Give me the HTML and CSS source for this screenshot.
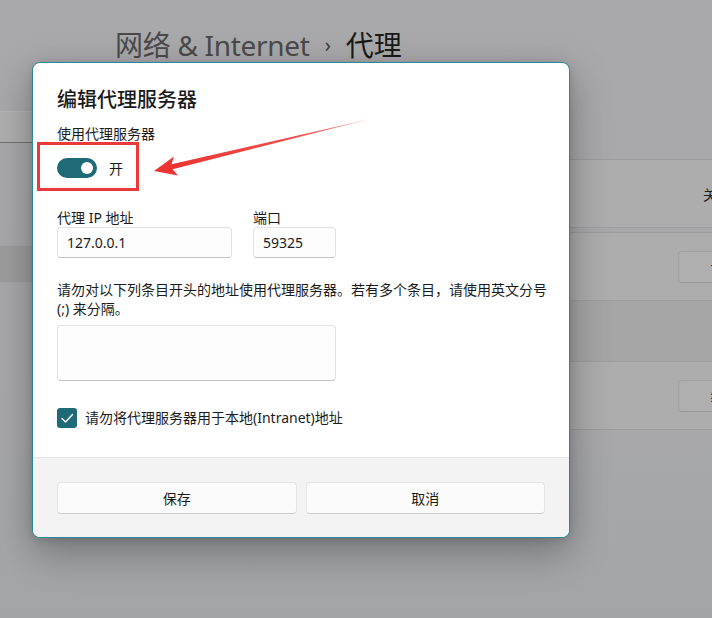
FILE: index.html
```html
<!DOCTYPE html>
<html lang="zh-CN">
<head>
    <meta charset="UTF-8" />
    <meta name="viewport" content="width=device-width, initial-scale=1.0"/>
    <title>代理</title>
    <link rel="stylesheet" href="styles.css">
</head>
<body>
<div class="app">
    <!-- Settings window behind the dialog (dimmed, mostly covered) -->
    <aside class="sidebar">
        <div class="search"></div>
        <nav class="nav">
            <div class="nav-item"></div>
            <div class="nav-item"></div>
            <div class="nav-item active"></div>
        </nav>
    </aside>

    <main class="main">
        <h1 class="crumbs">
            <span class="crumb-parent">网络 &amp; Internet</span>
            <span class="crumb-sep">›</span>
            <span class="crumb-current">代理</span>
        </h1>

        <div class="card">
            <span class="card-title"></span>
            <span class="card-state">关</span>
            <span class="bg-toggle"></span>
        </div>

        <div class="card-group">
            <div class="card">
                <span class="card-title"></span>
                <span class="bg-btn">设置</span>
            </div>
            <div class="card card-head">
                <span class="card-title"></span>
            </div>
            <div class="card">
                <span class="card-title"></span>
                <span class="bg-btn">编辑</span>
            </div>
        </div>
    </main>
</div>

<!-- Edit proxy dialog -->
<div class="dialog">
    <div class="dialog-body">
        <h2 class="dialog-title">编辑代理服务器</h2>

        <div class="field-label">使用代理服务器</div>
        <div class="switch-row">
            <span class="switch"><span class="knob"></span></span>
            <span class="switch-text">开</span>
        </div>

        <div class="fields">
            <div class="field field-ip">
                <div class="field-label">代理 IP 地址</div>
                <div class="input">127.0.0.1</div>
            </div>
            <div class="field field-port">
                <div class="field-label">端口</div>
                <div class="input">59325</div>
            </div>
        </div>

        <p class="hint">请勿对以下列条目开头的地址使用代理服务器。若有多个条目，请使用英文分号<br>(;) 来分隔。</p>
        <div class="textarea"></div>

        <label class="check-row">
            <span class="checkbox">
                <svg width="20" height="20" viewBox="0 0 20 20">
                    <polyline points="5,10.5 8.5,14 15.5,6.5" fill="none" stroke="#fff" stroke-width="1.4" stroke-linecap="round" stroke-linejoin="round"/>
                </svg>
            </span>
            <span>请勿将代理服务器用于本地(Intranet)地址</span>
        </label>
    </div>

    <div class="dialog-footer">
        <button class="btn">保存</button>
        <button class="btn">取消</button>
    </div>
</div>

<!-- Red annotation: box around the switch and arrow -->
<svg class="annotation" width="712" height="618" viewBox="0 0 712 618">
    <defs>
        <linearGradient id="arrowFade" gradientUnits="userSpaceOnUse" x1="370" y1="119" x2="175" y2="166">
            <stop offset="0" stop-color="#f6a3a3"/>
            <stop offset="0.35" stop-color="#f05050"/>
            <stop offset="1" stop-color="#ec3434"/>
        </linearGradient>
    </defs>
    <rect x="38.5" y="143.5" width="99" height="46" fill="none" stroke="#ec3a3a" stroke-width="3"/>
    <polygon points="154,171 174,156.5 171.5,164.2 370,119 172.6,169.3 178,175.5" fill="url(#arrowFade)"/>
</svg>
</body>
</html>
```

FILE: styles.css
```css
html, body {
    margin: 0;
    height: 100%;
    overflow: hidden;
}

body {
    position: relative;
    background: #a8a8aa;
    font-family: "Noto Sans", "Noto Sans CJK SC", sans-serif;
    color: #1b1b1b;
}

.app {
    display: flex;
    height: 100%;
    background: linear-gradient(to bottom, #a9a9ab 0%, #a8a8aa 70%, #a2a5a8 100%);
}

/* ---- dimmed settings page ---- */

.sidebar {
    width: 100px;
    flex-shrink: 0;
}

.search {
    margin-top: 111px;
    height: 30px;
    background: #afafb0;
    border-top: 1px solid #b6b6b7;
    border-bottom: 1px solid #727273;
}

.nav {
    margin-top: 25px;
    display: flex;
    flex-direction: column;
    gap: 3px;
}

.nav-item {
    height: 36px;
}

.nav-item.active {
    background: #9d9d9e;
}

.main {
    flex: 1;
    min-width: 0;
    padding-left: 15px;
    padding-top: 27px;
}

.crumbs {
    margin: 0 0 96px;
    font-size: 28px;
    line-height: 36px;
    font-weight: 400;
    white-space: nowrap;
    display: flex;
    align-items: center;
    gap: 13px;
}

.crumb-parent {
    color: #4a4a4b;
    letter-spacing: -0.3px;
}

.crumb-sep {
    font-size: 20px;
    color: #3a3a3a;
    padding: 0 2px;
}

.crumb-current {
    color: #1a1a1a;
}

.card {
    display: flex;
    align-items: center;
    height: 67px;
    margin-right: -80px;
    padding: 0 20px;
    background: #adadae;
    border: 1px solid #9d9d9e;
    border-radius: 4px;
    font-size: 14px;
}

.card-title {
    flex: 1;
}

.card-state {
    color: #1f1f1f;
    margin-right: 14px;
}

.bg-toggle {
    width: 40px;
    height: 20px;
    border: 1px solid #555;
    border-radius: 10px;
    box-sizing: border-box;
}

.card-group {
    margin-top: 4px;
}

.card-group .card {
    border-radius: 0;
    border-top: none;
}

.card-group .card:first-child {
    border-top: 1px solid #9d9d9e;
    border-radius: 4px 4px 0 0;
}

.card-group .card:last-child {
    border-radius: 0 0 4px 4px;
}

.card-head {
    height: 60px;
    background: #a7a6a7;
}

.bg-btn {
    width: 91px;
    height: 30px;
    line-height: 30px;
    text-align: center;
    border: 1px solid #a0a0a1;
    border-bottom-color: #989899;
    border-radius: 4px;
    background: #afafb0;
    color: #2a2a2a;
}

/* ---- dialog ---- */

.dialog {
    position: absolute;
    left: 32px;
    top: 62px;
    width: 538px;
    height: 476px;
    box-sizing: border-box;
    display: flex;
    flex-direction: column;
    background: #fff;
    border: 1px solid #2b8696;
    border-radius: 8px;
    overflow: hidden;
    box-shadow: 0 14px 40px rgba(0, 0, 0, 0.32), 0 2px 8px rgba(0, 0, 0, 0.12);
}

.dialog-body {
    flex: 1;
    padding: 23px 24px 0;
    font-size: 14px;
}

.dialog-title {
    margin: 0 0 10px;
    font-size: 20px;
    line-height: 28px;
    font-weight: 500;
    color: #1a1a1a;
}

.field-label {
    line-height: 20px;
    color: #1b1b1b;
}

.switch-row {
    margin-top: 14px;
    display: flex;
    align-items: center;
    gap: 12px;
    height: 20px;
}

.switch {
    width: 40px;
    height: 20px;
    border-radius: 10px;
    background: #1e6b77;
    display: flex;
    align-items: center;
    justify-content: flex-end;
    padding-right: 4px;
    box-sizing: border-box;
}

.knob {
    width: 12px;
    height: 12px;
    border-radius: 50%;
    background: #fff;
}

.switch-text {
    color: #1b1b1b;
}

.fields {
    margin-top: 30px;
    display: flex;
    gap: 21px;
}

.fields .field-label {
    line-height: 19px;
}

.field-ip {
    width: 175px;
}

.field-port {
    width: 83px;
}

.input {
    height: 31px;
    box-sizing: border-box;
    padding-left: 9px;
    line-height: 29px;
    border: 1px solid #e3e3e3;
    border-bottom-color: #c2c2c2;
    border-radius: 4px;
    background: #fdfdfd;
    color: #1b1b1b;
}

.hint {
    margin: 22px -6px 0 0;
    line-height: 19px;
    color: #1b1b1b;
}

.textarea {
    margin-top: 7px;
    width: 279px;
    height: 56px;
    box-sizing: border-box;
    border: 1px solid #e3e3e3;
    border-bottom-color: #c2c2c2;
    border-radius: 4px;
    background: #fdfdfd;
}

.check-row {
    margin-top: 27px;
    display: flex;
    align-items: center;
    gap: 8px;
    line-height: 20px;
    color: #1b1b1b;
}

.checkbox {
    width: 20px;
    height: 20px;
    border-radius: 3px;
    background: #1e6b77;
    display: flex;
}

.dialog-footer {
    display: flex;
    gap: 9px;
    padding: 24px 24px 23px;
    background: #f3f3f3;
    border-top: 1px solid #e5e5e5;
}

.btn {
    flex: 1;
    height: 32px;
    font-family: inherit;
    font-size: 14px;
    color: #1b1b1b;
    background: #fbfbfb;
    border: 1px solid #e5e5e5;
    border-bottom-color: #cccccc;
    border-radius: 4px;
}

.annotation {
    position: absolute;
    left: 0;
    top: 0;
    pointer-events: none;
}
```
